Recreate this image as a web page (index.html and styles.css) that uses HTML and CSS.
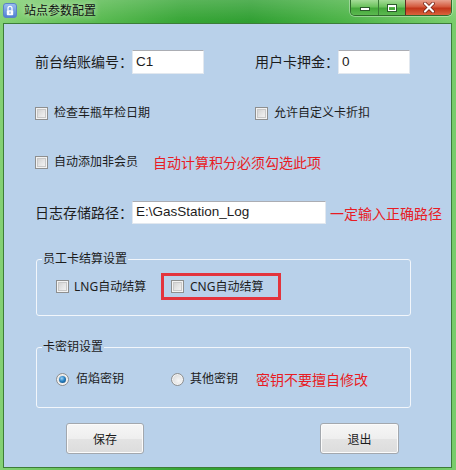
FILE: index.html
```html
<!DOCTYPE html>
<html lang="zh-CN">
<head>
<meta charset="utf-8">
<title>站点参数配置</title>
<link rel="stylesheet" href="styles.css">
</head>
<body>
<div class="window">
  <div class="titlebar">
    <div class="title">
      <svg class="app-icon" width="14" height="15" viewBox="0 0 14 15">
        <defs>
          <linearGradient id="ig" x1="0" y1="0" x2="0" y2="1">
            <stop offset="0" stop-color="#9cbff0"/>
            <stop offset="1" stop-color="#4f7fd2"/>
          </linearGradient>
        </defs>
        <rect x="0.5" y="0.5" width="13" height="14" rx="2.5" fill="url(#ig)" stroke="#5b83c6"/>
        <path d="M5 7.5V5.3a2 2 0 0 1 4 0V7.5" fill="none" stroke="#fff" stroke-width="1.3"/>
        <rect x="3.8" y="7.3" width="6.4" height="5" rx="0.8" fill="#fff"/>
        <rect x="6.5" y="8.6" width="1" height="2.2" fill="#6f95d6"/>
      </svg>
      <span class="title-text">站点参数配置</span>
    </div>
    <div class="caption-buttons">
      <span class="cap-btn cap-min">
        <svg width="12" height="6" viewBox="0 0 12 6"><rect x="1.5" y="1.5" width="9" height="3" fill="#fff" stroke="#2c5a2c" stroke-width="1"/></svg>
      </span>
      <span class="cap-btn cap-max">
        <svg width="12" height="10" viewBox="0 0 12 10"><rect x="1.5" y="1.5" width="9" height="7" fill="none" stroke="#2c5a2c" stroke-width="1"/><rect x="2.5" y="2.5" width="7" height="5" fill="none" stroke="#fff" stroke-width="1"/><rect x="2.5" y="2.5" width="7" height="1.5" fill="#fff"/></svg>
      </span>
      <span class="cap-btn cap-close">
        <svg width="14" height="11" viewBox="0 0 14 11"><path d="M3 1.5L11 9.5M11 1.5L3 9.5" stroke="#6b1c10" stroke-width="3.6" stroke-linecap="round"/><path d="M3 1.5L11 9.5M11 1.5L3 9.5" stroke="#fff" stroke-width="2.2" stroke-linecap="round"/></svg>
      </span>
    </div>
  </div>

  <div class="client">
    <div class="row row-fields">
      <div class="cell cell-left">
        <span class="field-label label-wide">前台结账编号：</span>
        <span class="textbox textbox-short">C1</span>
      </div>
      <div class="cell">
        <span class="field-label label-narrow">用户卡押金：</span>
        <span class="textbox textbox-short">0</span>
      </div>
    </div>

    <div class="row row-checks">
      <div class="cell cell-left">
        <span class="checkbox"></span>
        <span class="check-label">检查车瓶年检日期</span>
      </div>
      <div class="cell">
        <span class="checkbox"></span>
        <span class="check-label">允许自定义卡折扣</span>
      </div>
    </div>

    <div class="row row-checks">
      <div class="cell cell-member">
        <span class="checkbox"></span>
        <span class="check-label">自动添加非会员</span>
      </div>
      <span class="note">自动计算积分必须勾选此项</span>
    </div>

    <div class="row row-path">
      <span class="field-label label-wide">日志存储路径：</span>
      <span class="textbox textbox-long">E:\GasStation_Log</span>
      <span class="note note-path">一定输入正确路径</span>
    </div>

    <div class="group group-staff">
      <span class="group-caption">员工卡结算设置</span>
      <div class="group-item item-lng">
        <span class="checkbox"></span>
        <span class="check-label">LNG自动结算</span>
      </div>
      <div class="group-item item-cng">
        <span class="checkbox"></span>
        <span class="check-label">CNG自动结算</span>
      </div>
    </div>

    <div class="group group-key">
      <span class="group-caption">卡密钥设置</span>
      <div class="group-item item-radio1">
        <span class="radio radio-checked"></span>
        <span class="check-label">佰焰密钥</span>
      </div>
      <div class="group-item item-radio2">
        <span class="radio"></span>
        <span class="check-label">其他密钥</span>
      </div>
      <span class="note">密钥不要擅自修改</span>
    </div>

    <div class="row row-buttons">
      <span class="button button-save">保存</span>
      <span class="button button-exit">退出</span>
    </div>
  </div>
</div>
</body>
</html>
```

FILE: styles.css
```css
* { box-sizing: border-box; }

html, body {
  margin: 0;
  padding: 0;
}

body {
  width: 456px;
  height: 470px;
  overflow: hidden;
  font-family: "Noto Sans", "Noto Sans CJK SC", sans-serif;
  color: #1c1c1c;
  background: #ffffff;
}

.window {
  width: 456px;
  height: 470px;
  display: flex;
  flex-direction: column;
  padding: 0 4px 2px 3px;
  background:
    linear-gradient(to bottom, rgba(255,255,255,0.18) 0, rgba(255,255,255,0) 22px),
    linear-gradient(to right, #84d174 0%, #5fbe55 18%, #36a535 40%, #2f9f31 55%, #4ab345 75%, #79cd6c 100%);
}

/* ---------- title bar ---------- */
.titlebar {
  height: 23px;
  flex: none;
  display: flex;
  justify-content: space-between;
  align-items: flex-start;
}

.title {
  display: flex;
  align-items: center;
  padding-top: 2px;
  gap: 7px;
}

.app-icon { display: block; }

.title-text {
  font-size: 12px;
  line-height: 16px;
  color: #111;
  font-family: "Noto Sans CJK SC", sans-serif;
  text-shadow: 0 0 6px rgba(255,255,255,0.8);
}

.caption-buttons {
  display: flex;
  height: 16px;
  border: 1px solid #2f6b2c;
  border-top: none;
  border-radius: 0 0 5px 5px;
  overflow: hidden;
  box-shadow: 0 0 0 1px rgba(255,255,255,0.35);
}

.cap-btn {
  display: flex;
  align-items: center;
  justify-content: center;
  height: 15px;
}

.cap-min {
  width: 28px;
  background: linear-gradient(to bottom, #a4dc97 0%, #6cc25d 45%, #45a83b 55%, #5bb94f 100%);
  border-right: 1px solid #3a7a36;
  padding-top: 3px;
}

.cap-max {
  width: 27px;
  background: linear-gradient(to bottom, #a4dc97 0%, #6cc25d 45%, #45a83b 55%, #5bb94f 100%);
  border-right: 1px solid #5d2d20;
}

.cap-close {
  width: 45px;
  background: linear-gradient(to bottom, #e8a28f 0%, #d45a3e 45%, #c2361a 55%, #d9643c 100%);
}

/* ---------- client area ---------- */
.client {
  flex: 1;
  display: flex;
  flex-direction: column;
  align-items: flex-start;
  border: 1px solid #3c7d38;
  background: #b9d1ea;
  padding-left: 31px;
}

.row {
  display: flex;
  align-items: center;
}

.cell {
  display: flex;
  align-items: center;
}

.cell-left { width: 220px; }
.cell-member { width: 118px; }

.row-fields {
  margin-top: 26px;
  height: 24px;
}

.field-label {
  font-size: 14px;
  line-height: 24px;
  white-space: nowrap;
}

.label-wide { width: 97px; }
.label-narrow { width: 83px; }

.textbox {
  display: block;
  background: #ffffff;
  border: 1px solid #e2e8ef;
  border-top-color: #abadb3;
  padding-left: 3px;
  font-family: "Liberation Sans", "Noto Sans CJK SC", sans-serif;
  font-size: 13.5px;
  line-height: 21px;
  color: #1c1c1c;
  white-space: nowrap;
  overflow: hidden;
}

.textbox-short { width: 72px; height: 24px; }
.textbox-long { width: 194px; height: 23px; line-height: 20px; }

.row-checks {
  margin-top: 29px;
  height: 20px;
}

.checkbox {
  flex: none;
  width: 13px;
  height: 13px;
  border: 1px solid #8e8f8f;
  background: linear-gradient(135deg, #cbcbcb 0%, #e6e6e6 55%, #f8f8f8 100%);
  box-shadow: inset 0 0 0 1px #f3f3f3, inset 0 0 0 2px #c9c9c9;
  margin-right: 6px;
}

.check-label {
  font-size: 12px;
  line-height: 20px;
  white-space: nowrap;
  color: #1c1c1c;
}

.note {
  font-size: 14px;
  line-height: 20px;
  color: #e81c24;
  white-space: nowrap;
  font-family: "Noto Sans CJK SC", sans-serif;
}

.row-path {
  margin-top: 29px;
  height: 23px;
}

.note-path { margin-left: 4px; }

/* ---------- group boxes ---------- */
.group {
  position: relative;
  display: flex;
  align-items: center;
  width: 375px;
  margin-left: 1px;
  border: 1px solid #f2f6fb;
  border-radius: 3px;
  padding-left: 19px;
}

.group-caption {
  position: absolute;
  top: -9px;
  left: 5px;
  padding: 0 1px;
  font-size: 12px;
  line-height: 16px;
  background: #b9d1ea;
  color: #1c1c1c;
  white-space: nowrap;
}

.group-staff {
  margin-top: 35px;
  padding-top: 13px;
  padding-bottom: 15px;
}

.group-item {
  display: flex;
  align-items: center;
  height: 20px;
}

.item-lng { width: 105px; }
.item-lng .checkbox { margin-right: 5px; }

.item-cng {
  width: 120px;
  height: 27px;
  border: 3px solid #e3343d;
  padding-left: 7px;
}

.group-key {
  margin-top: 31px;
  padding-top: 21px;
  padding-bottom: 18px;
}

.radio {
  flex: none;
  width: 13px;
  height: 13px;
  border-radius: 50%;
  border: 1px solid #8e8f8f;
  background: radial-gradient(circle at 60% 60%, #f7f7f7 0%, #e2e2e2 55%, #cfcfcf 100%);
  box-shadow: inset 0 0 0 1px #f4f4f4;
  position: relative;
}

.radio-checked::after {
  content: "";
  position: absolute;
  left: 2px;
  top: 2px;
  width: 7px;
  height: 7px;
  border-radius: 50%;
  background: radial-gradient(circle at 40% 35%, #9fd3f5 0%, #2a83c4 45%, #0c3f6d 100%);
}

.item-radio1 { width: 115px; }
.item-radio1 .radio { margin-right: 7px; }
.item-radio2 { width: 85px; }
.item-radio2 .radio { margin-right: 6px; }

/* ---------- buttons ---------- */
.row-buttons {
  margin-top: 15px;
  margin-left: 31px;
  gap: 176px;
}

.button {
  display: flex;
  align-items: center;
  justify-content: center;
  height: 31px;
  border: 1px solid #a3a8ae;
  border-radius: 3px;
  background: linear-gradient(to bottom, #f6f6f6 0%, #eeeeee 50%, #e3e3e3 51%, #dcdcdc 100%);
  box-shadow: inset 0 0 0 1px #fbfbfb;
  font-size: 12px;
  color: #1c1c1c;
}

.button-save { width: 78px; }
.button-exit { width: 79px; }
```
